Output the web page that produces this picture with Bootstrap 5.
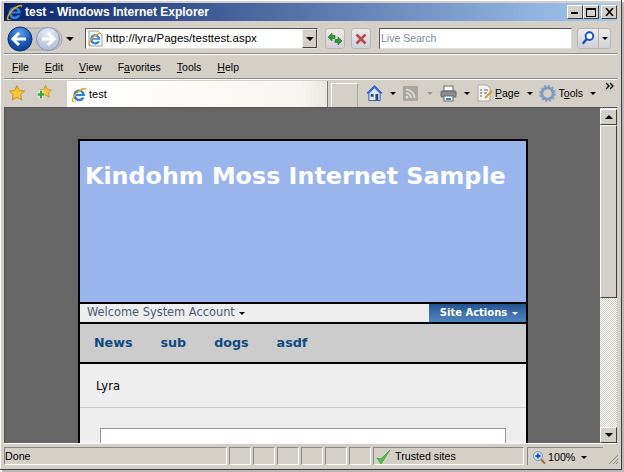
<!DOCTYPE html>
<html lang="en">
<head>
    <meta charset="UTF-8">
    <title>test - Windows Internet Explorer</title>
    <link href="https://cdn.jsdelivr.net/npm/bootstrap@5.3.3/dist/css/bootstrap.min.css" rel="stylesheet">
    <style>
        html, body { width: 624px; height: 472px; overflow: hidden; background: #fff; }
        body { font-family: "Liberation Sans", Arial, sans-serif; font-size: 11px; color: #000; line-height: 1; }
        u { text-underline-offset: 1px; }
        .ie-window { width: 622px; height: 470px; padding: 3px 4px 4px; background: #d4d0c8; border-right: 1px solid #404040; border-bottom: 1px solid #404040; box-shadow: inset 1px 1px 0 #fff, 2px 2px 0 #b8b8b8; }
        .ie-title { height: 18px; flex: none; background: linear-gradient(90deg, #0a246a, #a6caf0); color: #fff; font-weight: 700; font-size: 12px; padding: 0 0 0 2px; }
        .ie-title-icon { margin-right: 2px; }
        .win-btn { width: 16px; height: 14px; background: #d4d0c8; border: 1px solid; border-color: #fff #404040 #404040 #fff; }
        .win-close { margin-left: 2px; }
        .ie-addr { height: 33px; flex: none; border-bottom: 1px solid #888; box-shadow: 0 1px 0 #fff; padding: 3px 0 0 3px; }
        .addr-box { width: 233px; height: 21px; margin-left: 11px; background: #fff; border: 1px solid; border-color: #555 #ddd #ddd #555; padding-left: 1px; font-size: 11.5px; }
        .addr-icon { margin-right: 2px; }
        .addr-drop { width: 15px; height: 19px; background: #d4d0c8; border: 1px solid; border-color: #eee #404040 #404040 #eee; }
        .tool-square { width: 20px; height: 21px; margin-left: 6px; border: 1px solid #b8b6b0; border-radius: 3px; background: linear-gradient(#eeece8, #d0d0d8); }
        .tool-refresh { margin-left: 7px; }
        .search-box { width: 193px; height: 21px; margin-left: 8px; background: #fff; border: 1px solid; border-color: #555 #ddd #ddd #555; color: #7a88a8; padding-left: 1px; font-size: 10.5px; }
        .search-btn { width: 34px; height: 21px; margin-left: 5px; border: 1px solid #b8b6b0; border-radius: 3px; background: linear-gradient(#eeece8, #d0d0d8); }
        .search-icon { border-right: 1px solid #b8b6b0; }
        .search-tri { margin-left: 3px; border-top-color: #1850c0; }
        .ie-menu { height: 24px; flex: none; border-bottom: 1px solid #888; box-shadow: 0 1px 0 #fff; margin-top: 1px; padding: 2px 0 0 8px; gap: 16px; font-size: 10.5px; }
        .ie-tabs { height: 28px; flex: none; padding-top: 2px; }
        .fav-group { width: 63px; height: 24px; padding-left: 5px; gap: 11px; }
        .tab-cur { width: 261px; height: 26px; background: linear-gradient(90deg, #fff, #f8f6f2 90%, #e8e6e0); border-right: 1px solid #777; padding: 1px 0 0 4px; gap: 2px; }
        .tab-new { width: 27px; height: 24px; margin: 2px 0 0 3px; border: 1px solid #a8a69f; border-bottom: 0; border-left-color: #fff; border-top-color: #fff; }
        .cmd-bar { height: 24px; padding-left: 8px; position: relative; font-size: 10.5px; }
        .gap-6 { margin-left: 6px; }
        .gap-7 { margin-left: 7px; }
        .gap-9 { margin-left: 9px; }
        .gap-1px { margin-left: 1px; }
        .gap-3px { margin-left: 3px; }
        .more-mark { position: absolute; right: 2px; top: 0; }
        .tri { width: 0; height: 0; border-left: 3px solid transparent; border-right: 3px solid transparent; border-top: 3px solid #000; display: inline-block; flex: none; }
        .tri-dim { border-top-color: #999; }
        .tri-up { border-top: 0; border-bottom: 4px solid #000; border-left-width: 4px; border-right-width: 4px; }
        .tri-big { border-top-width: 4px; border-left-width: 4px; border-right-width: 4px; }
        .site-tri { border-top-color: #fff; }
        .ie-view { flex: 1; min-height: 0; overflow: hidden; border-top: 1px solid #555; border-left: 1px solid #555; }
        .page-area { flex: 1; background: #666; padding: 31px 73px 0 73px; overflow: hidden; font-family: "DejaVu Sans", Verdana, sans-serif; }
        .site-frame { width: 450px; border: 2px solid #000; border-bottom: 0; }
        .site-head { height: 161px; background: #9ab5ec; color: #fff; font-weight: 700; font-size: 23.8px; padding: 21px 0 0 5px; white-space: nowrap; line-height: 1.2; }
        .site-welcome { height: 18px; background: #eee; border-top: 2px solid #000; border-bottom: 2px solid #000; box-sizing: content-box; color: #4a5a78; font-size: 11.4px; padding-left: 7px; }
        .site-actions { width: 97px; height: 18px; background: linear-gradient(#21528f, #3e70ae 50%, #4f82bd); color: #fff; font-weight: 700; font-size: 10px; gap: 5px; padding-left: 3px; }
        .site-nav { height: 38px; background: #ccc; border-bottom: 2px solid #000; box-sizing: content-box; color: #0e4a82; font-weight: 700; font-size: 12.7px; padding-left: 14px; gap: 28px; }
        .site-crumb { height: 44px; background: #eee; border-bottom: 1px solid #ccc; font-size: 11.5px; padding: 2px 0 0 16px; }
        .site-body { background: #eee; padding: 20px 20px 0; height: 60px; }
        .site-box { height: 40px; background: #fff; border: 1px solid #999; }
        .ie-scroll { width: 17px; flex: none; padding-top: 1px; background-color: #eeece8; background-image: repeating-conic-gradient(#fff 0 25%, #d4d0c8 0 50%); background-size: 2px 2px; }
        .scroll-btn { height: 16px; flex: none; background: #d4d0c8; border: 1px solid; border-color: #fff #404040 #404040 #fff; }
        .scroll-thumb { height: 173px; flex: none; background: #d4d0c8; border: 1px solid; border-color: #fff #404040 #404040 #fff; }
        .ie-status { height: 22px; flex: none; border-top: 1px solid #fff; padding-top: 3px; gap: 2px; position: relative; font-size: 10.7px; }
        .stat-cell { height: 18px; padding-top: 1px; border: 1px solid; border-color: #888 #fff #fff #888; flex: none; }
        .stat-done { width: 223px; }
        .stat-small { width: 22px; }
        .stat-zone { width: 151px; padding-left: 2px; gap: 3px; }
        .stat-zoom { width: 76px; margin-left: 1px; padding-left: 4px; gap: 2px; border-bottom: 0; border-right: 0; }
        .stat-grip { position: absolute; right: -2px; bottom: 0; }
    </style>
</head>
<body>
    <svg width="0" height="0" class="position-absolute">
        <defs>
            <symbol id="ie" viewBox="0 0 16 16">
                <path d="M8.2 2.6a5.8 5.8 0 1 0 5.4 8h-3a3 3 0 0 1-5.4-1.700h8.700A5.800 5.800 0 0 0 8.200 2.600zM5.300 7a3 3 0 0 1 5.800 0z" fill="#2f80dc" fill-rule="evenodd"/>
                <path d="M15 1C12.500-.2 7 3 3.500 7.500 1.200 10.500 0 14 1.200 15c1 .8 3 .1 5-1.300-1.800.8-3.300 1-3.800.4-.7-.8.3-3.200 2.300-5.800C7.800 5 12.600 1.600 14.200 2.300c.6.300.4 1.500-.4 2.900 1.200-1.800 1.800-3.500 1.200-4.200z" fill="#e8a317"/>
            </symbol>
            <symbol id="star" viewBox="0 0 16 16">
                <path d="M8 .6l2.300 4.800 5.200.7-3.800 3.600 1 5.200L8 12.400l-4.700 2.500 1-5.200L.5 6.100l5.200-.7z" fill="#fbc433" stroke="#c08414" stroke-width=".8"/>
            </symbol>
        </defs>
    </svg>

    <div class="ie-window d-flex flex-column">
        <div class="ie-title d-flex align-items-center">
            <svg width="17" height="17" class="ie-title-icon"><use href="#ie"/></svg>
            <span class="flex-grow-1">test - Windows Internet Explorer</span>
            <div class="d-flex">
                <div class="win-btn d-flex align-items-end justify-content-center pb-1">
                    <svg width="8" height="2"><rect width="7" height="2" fill="#000"/></svg>
                </div>
                <div class="win-btn d-flex align-items-center justify-content-center">
                    <svg width="10" height="9"><rect x=".5" y="1" width="9" height="7.5" fill="none" stroke="#000"/><rect width="10" height="2" fill="#000"/></svg>
                </div>
                <div class="win-btn win-close d-flex align-items-center justify-content-center">
                    <svg width="9" height="8"><path d="M1 0l7 8M8 0L1 8" stroke="#000" stroke-width="1.6"/></svg>
                </div>
            </div>
        </div>

        <div class="ie-addr d-flex align-items-center">
            <svg width="56" height="28" viewBox="0 0 56 28">
                <defs>
                    <radialGradient id="backG" cx=".5" cy=".25" r=".8"><stop offset="0" stop-color="#5aa0ee"/><stop offset=".6" stop-color="#1a55b0"/><stop offset="1" stop-color="#0c3a8a"/></radialGradient>
                    <radialGradient id="fwdG" cx=".5" cy=".25" r=".8"><stop offset="0" stop-color="#e8eef8"/><stop offset="1" stop-color="#a8b8d2"/></radialGradient>
                </defs>
                <rect x="1" y="3" width="54" height="22" rx="11" fill="#c8c6c4" stroke="#a8a6a4"/>
                <circle cx="13" cy="14" r="12" fill="url(#backG)" stroke="#0e2f70"/>
                <circle cx="41" cy="14" r="11.5" fill="url(#fwdG)" stroke="#8a98b0"/>
                <path d="M6 14h13M12 8l-6 6 6 6" fill="none" stroke="#fff" stroke-width="3"/>
                <path d="M35 14h12M41 8l6 6-6 6" fill="none" stroke="#fff" stroke-width="3"/>
            </svg>
            <span class="tri tri-big gap-3px"></span>
            <div class="addr-box d-flex align-items-center">
                <svg width="17" height="17" class="addr-icon" viewBox="0 0 17 17">
                    <path d="M2 1h9l4 4v11H2z" fill="#fff" stroke="#999"/>
                    <use href="#ie" x="1" y="2" width="14" height="14"/>
                </svg>
                <span class="flex-grow-1">http://lyra/Pages/testtest.aspx</span>
                <div class="addr-drop d-flex align-items-center justify-content-center"><span class="tri tri-big"></span></div>
            </div>
            <div class="tool-square tool-refresh d-flex align-items-center justify-content-center">
                <svg width="16" height="14" viewBox="0 0 16 14"><path d="M1 5l4-4v2.500h3v3H5V9z" fill="#2f9a3a" stroke="#1c6e26" stroke-width=".6"/><path d="M15 9l-4 4v-2.500H8v-3h3V5z" fill="#2f9a3a" stroke="#1c6e26" stroke-width=".6"/></svg>
            </div>
            <div class="tool-square d-flex align-items-center justify-content-center">
                <svg width="12" height="12"><path d="M1.5 1.500l9 9M10.500 1.500l-9 9" stroke="#b84a50" stroke-width="2.600"/></svg>
            </div>
            <div class="search-box d-flex align-items-center">Live Search</div>
            <div class="search-btn d-flex align-items-center">
                <svg width="21" height="19" viewBox="0 0 21 19" class="search-icon"><circle cx="12" cy="7" r="4" fill="#fff" stroke="#1850c0" stroke-width="2"/><path d="M9 10l-4 5" stroke="#1850c0" stroke-width="2.5"/></svg>
                <span class="tri search-tri"></span>
            </div>
        </div>

        <div class="ie-menu d-flex align-items-center">
            <span><u>F</u>ile</span><span><u>E</u>dit</span><span><u>V</u>iew</span><span>F<u>a</u>vorites</span><span><u>T</u>ools</span><span><u>H</u>elp</span>
        </div>

        <div class="ie-tabs d-flex align-items-start">
            <div class="fav-group d-flex align-items-center">
                <svg width="16" height="16"><use href="#star"/></svg>
                <svg width="16" height="16" viewBox="0 0 16 16"><use href="#star" x="3" y="0" width="13" height="13"/><path d="M5 5v9M1 9.500h8" stroke="#fff" stroke-width="4"/><path d="M5 5.500v8M1.500 9.500h7" stroke="#3aa83a" stroke-width="2.400"/></svg>
            </div>
            <div class="tab-cur d-flex align-items-center">
                <svg width="16" height="16"><use href="#ie"/></svg>
                <span>test</span>
            </div>
            <div class="tab-new"></div>
            <div class="cmd-bar flex-grow-1 d-flex align-items-center">
                <svg width="17" height="18" viewBox="0 0 18 18"><path d="M9 1L1 9h2v8h12V9h2z" fill="#dfe6f2" stroke="#3a5a9a"/><path d="M9 1L1 9h3l5-5 5 5h3z" fill="#3a6ad0"/><rect x="10" y="10" width="3" height="7" fill="#1f4a90"/><rect x="5" y="10" width="3" height="3" fill="#1f4a90"/></svg>
                <span class="tri gap-7"></span>
                <svg width="15" height="15" class="gap-7" viewBox="0 0 15 15"><rect width="15" height="15" rx="1" fill="#a8a6a0"/><circle cx="4" cy="11" r="1.5" fill="#e4e2dc"/><path d="M3 7a5 5 0 0 1 5 5M3 3.500A8.500 8.500 0 0 1 11.500 12" fill="none" stroke="#e4e2dc" stroke-width="1.6"/></svg>
                <span class="tri tri-dim gap-9"></span>
                <svg width="17" height="17" class="gap-7" viewBox="0 0 17 17"><rect x="4" y="1" width="9" height="5" fill="#fff" stroke="#666"/><rect x="1" y="6" width="15" height="6" rx="1" fill="#8a8e94" stroke="#666"/><rect x="4" y="11" width="9" height="5" fill="#fff" stroke="#666"/><rect x="6" y="13" width="5" height="2" fill="#2a90c0"/></svg>
                <span class="tri gap-7"></span>
                <svg width="18" height="18" class="gap-6" viewBox="0 0 18 18"><path d="M2 1h9l3 3v13H2z" fill="#f2f2ee" stroke="#aaa"/><path d="M4 6h2M8 6h4M4 9h2M8 9h3M4 12h2" stroke="#667" stroke-width="1.2"/><path d="M9 14l7-7" stroke="#d8a030" stroke-width="2"/></svg>
                <span class="gap-1px"><u>P</u>age</span>
                <span class="tri gap-7"></span>
                <svg width="17" height="17" class="gap-6" viewBox="0 0 18 18"><circle cx="9" cy="9" r="6" fill="none" stroke="#7e9cc0" stroke-width="3"/><circle cx="9" cy="9" r="8" fill="none" stroke="#8aa4c4" stroke-width="2" stroke-dasharray="2.500 1.700"/></svg>
                <span class="gap-3px">T<u>o</u>ols</span>
                <span class="tri gap-7"></span>
                <svg width="10" height="10" viewBox="0 0 10 10" class="more-mark"><path d="M1 2l3 3-3 3M5 2l3 3-3 3" fill="none" stroke="#000" stroke-width="1.3"/></svg>
            </div>
        </div>

        <div class="ie-view d-flex">
            <div class="page-area">
                <div class="site-frame">
                    <div class="site-head">Kindohm Moss Internet Sample</div>
                    <div class="site-welcome d-flex align-items-center justify-content-between">
                        <span class="d-flex align-items-center gap-1">Welcome System Account <span class="tri"></span></span>
                        <div class="site-actions d-flex align-items-center justify-content-center">Site Actions <span class="tri site-tri"></span></div>
                    </div>
                    <div class="site-nav d-flex align-items-center"><span>News</span><span>sub</span><span>dogs</span><span>asdf</span></div>
                    <div class="site-crumb d-flex align-items-center">Lyra</div>
                    <div class="site-body"><div class="site-box"></div></div>
                </div>
            </div>
            <div class="ie-scroll d-flex flex-column">
                <div class="scroll-btn d-flex align-items-center justify-content-center"><span class="tri tri-up"></span></div>
                <div class="scroll-thumb"></div>
                <div class="flex-grow-1"></div>
                <div class="scroll-btn d-flex align-items-center justify-content-center"><span class="tri tri-big"></span></div>
            </div>
        </div>

        <div class="ie-status d-flex align-items-start">
            <div class="stat-cell stat-done d-flex align-items-center">Done</div>
            <div class="stat-cell stat-small"></div>
            <div class="stat-cell stat-small"></div>
            <div class="stat-cell stat-small"></div>
            <div class="stat-cell stat-small"></div>
            <div class="stat-cell stat-small"></div>
            <div class="stat-cell stat-small"></div>
            <div class="stat-cell stat-zone d-flex align-items-center">
                <svg width="16" height="16" viewBox="0 0 16 16"><path d="M1 9l4 6 9-14-9 9z" fill="#4cc44c" stroke="#2c8a2c" stroke-width=".6"/></svg>
                <span>Trusted sites</span>
            </div>
            <div class="stat-cell stat-zoom d-flex align-items-center">
                <svg width="14" height="15" viewBox="0 0 14 15"><circle cx="6" cy="6" r="4.5" fill="#cfe0f8" stroke="#8098b8"/><path d="M6 3.500v5M3.500 6h5" stroke="#1a58c0" stroke-width="1.8"/><path d="M9 9.500l4 4" stroke="#9a6a30" stroke-width="2"/></svg>
                <span class="flex-grow-1">100%</span>
                <span class="tri me-3"></span>
            </div>
            <svg width="12" height="12" viewBox="0 0 12 12" class="stat-grip"><path d="M11 2L2 11M11 6l-5 5M11 9l-2 2" stroke="#8a8880"/></svg>
        </div>
    </div>
    <script src="https://cdn.jsdelivr.net/npm/bootstrap@5.3.3/dist/js/bootstrap.bundle.min.js"></script>
</body>
</html>
